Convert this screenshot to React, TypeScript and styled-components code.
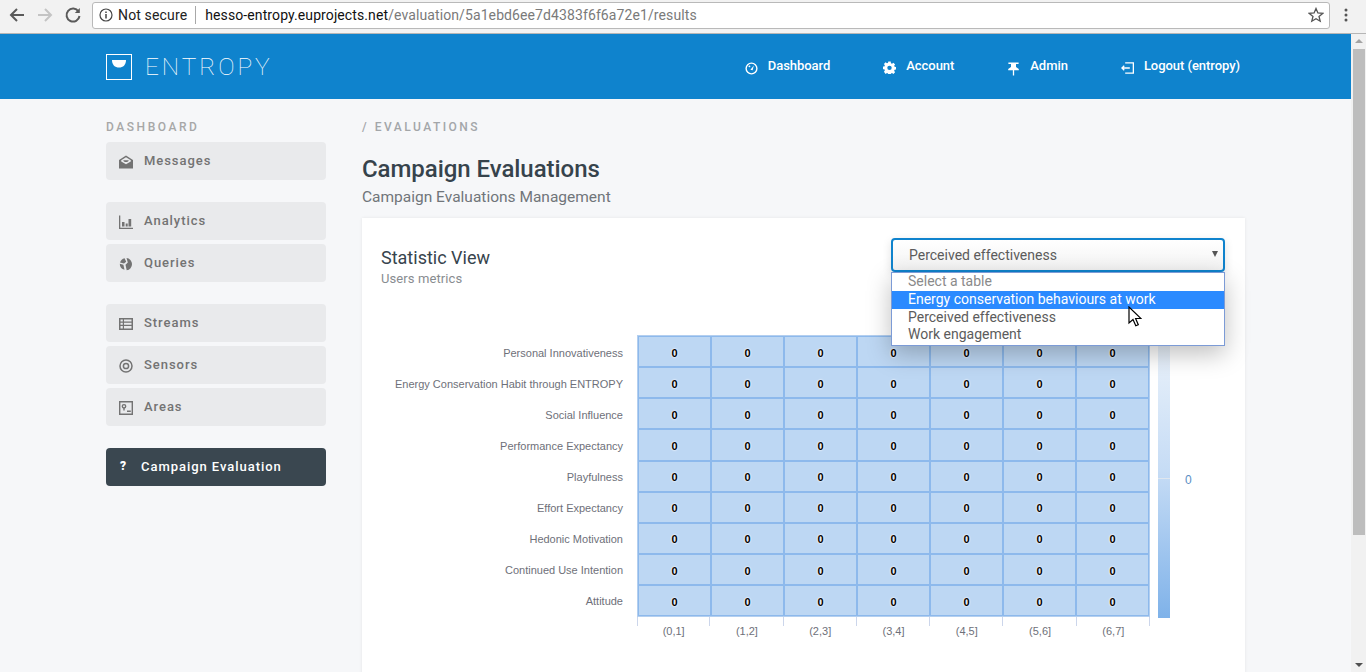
import React from "react";
import styled, { createGlobalStyle } from "styled-components";

const GlobalStyle = createGlobalStyle`
  html, body {
    margin: 0;
    padding: 0;
    height: 100%;
    overflow: hidden;
    background: #f6f7f9;
    font-family: Roboto, "Liberation Sans", sans-serif;
  }
  * {
    box-sizing: border-box;
  }
`;

const Window = styled.div`
  width: 1366px;
  height: 672px;
  display: flex;
  flex-direction: column;
  overflow: hidden;
`;

/* browser chrome */
const BrowserBar = styled.div`
  height: 34px;
  flex: none;
  display: flex;
  align-items: center;
  background: #f2f2f2;
  border-bottom: 1px solid #b6b6b6;
  padding: 0 0 3px 8px;
`;

const NavGlyph = styled.div<{ $disabled?: boolean }>`
  width: 18px;
  height: 18px;
  margin-right: 10px;
  display: flex;
  color: ${(p) => (p.$disabled ? "#c4c4c4" : "#5a5a5a")};
`;

const AddressBox = styled.div`
  width: 1238px;
  height: 27px;
  display: flex;
  align-items: center;
  background: #fff;
  border: 1px solid #b9b9b9;
  border-radius: 3px;
  padding: 0 5px 0 6px;
  font-size: 14px;
  color: #222;
`;

const NotSecure = styled.span`
  margin-left: 5px;
  padding-right: 8px;
  border-right: 1px solid #a8a8a8;
  line-height: 18px;
  letter-spacing: 0.15px;
`;

const Url = styled.span`
  margin-left: 9px;
  flex: 1;
  letter-spacing: 0.1px;
  color: #111;
`;

const UrlRest = styled.span`
  color: #7a7a7a;
`;

const Dots = styled.div`
  margin-left: 14px;
  display: flex;
  color: #555;
`;

/* page */
const Viewport = styled.div`
  flex: 1;
  display: flex;
  min-height: 0;
`;

const Page = styled.div`
  flex: 1;
  min-width: 0;
  background: #f6f7f9;
`;

const Scrollbar = styled.div`
  width: 15px;
  flex: none;
  position: relative;
  background: #f1f1f1;
`;

const ScrollThumb = styled.div`
  position: absolute;
  top: 15px;
  left: 2px;
  right: 1px;
  height: 486px;
  background: #bdbdbd;
`;

const ScrollArrow = styled.div<{ $down?: boolean }>`
  position: absolute;
  left: 4px;
  ${(p) => (p.$down ? "bottom: 5px;" : "top: 5px;")}
  width: 0;
  height: 0;
  border-left: 4px solid transparent;
  border-right: 4px solid transparent;
  ${(p) => (p.$down ? "border-top: 4px solid #505050;" : "border-bottom: 4px solid #a3a3a3;")}
`;

const Header = styled.header`
  height: 65px;
  background: #0f83cd;
`;

const HeaderInner = styled.div`
  width: 1139px;
  height: 100%;
  margin-left: 106px;
  display: flex;
  align-items: center;
  justify-content: space-between;
  padding-right: 5px;
`;

const Brand = styled.div`
  display: flex;
  align-items: center;
  color: #fff;
`;

const BrandName = styled.span`
  margin-left: 13px;
  font-size: 24.5px;
  font-weight: 100;
  letter-spacing: 2.9px;
  line-height: 30px;
`;

const TopNav = styled.nav`
  display: flex;
  gap: 53px;
`;

const TopLink = styled.a`
  display: flex;
  align-items: flex-start;
  gap: 10px;
  color: #fff;
  font-size: 13px;
  font-weight: 500;
  line-height: 16px;
  letter-spacing: -0.05px;
  svg {
    margin-top: 3px;
    flex: none;
  }
`;

const Content = styled.div`
  width: 1139px;
  margin-left: 106px;
  display: flex;
  gap: 36px;
`;

const Sidebar = styled.aside`
  width: 220px;
  flex: none;
  padding-top: 21px;
`;

const SideTitle = styled.div`
  font-size: 12px;
  font-weight: 500;
  line-height: 15px;
  letter-spacing: 2.55px;
  color: #a7a7a7;
  margin-bottom: 7px;
`;

const SideGroup = styled.div`
  display: flex;
  flex-direction: column;
  gap: 4px;
  margin-bottom: 22px;
`;

const SideItem = styled.a<{ $active?: boolean }>`
  height: 38px;
  display: flex;
  align-items: center;
  padding: 0 0 2px 13px;
  border-radius: 4px;
  background: ${(p) => (p.$active ? "#3a4750" : "#e9eaec")};
  color: ${(p) => (p.$active ? "#fff" : "#737373")};
  font-size: 13px;
  font-weight: 500;
  letter-spacing: 0.95px;
  svg {
    flex: none;
    margin: 3px 11px 0 0;
  }
`;

const QuestionMark = styled.span`
  width: 22px;
  padding-left: 1px;
  font-weight: 900;
  font-size: 12px;
`;

const Main = styled.main`
  flex: 1;
  min-width: 0;
`;

const Crumb = styled.div`
  padding-top: 21px;
  font-size: 12px;
  font-weight: 500;
  line-height: 15px;
  letter-spacing: 2.5px;
  color: #a3a6a9;
`;

const Title = styled.h1`
  margin: 19px 0 0;
  font-size: 24px;
  font-weight: 500;
  line-height: 30px;
  color: #36434c;
  letter-spacing: -0.05px;
`;

const Subtitle = styled.p`
  margin: 3px 0 0;
  font-size: 15.5px;
  line-height: 20px;
  color: #70757a;
`;

const Card = styled.section`
  margin-top: 11px;
  height: 460px;
  background: #fff;
  box-shadow: 0 0 3px rgba(0, 0, 0, 0.08);
  padding: 20px 20px 0 19px;
`;

const CardHead = styled.div`
  display: flex;
  justify-content: space-between;
  align-items: flex-start;
`;

const HeadText = styled.div`
  padding-top: 8px;
`;

const CardTitle = styled.div`
  font-size: 18px;
  line-height: 23px;
  color: #37444d;
`;

const CardSub = styled.div`
  font-size: 13px;
  line-height: 18px;
  margin-top: 1px;
  color: #888c90;
  letter-spacing: 0.1px;
`;

const SelectWrap = styled.div`
  position: relative;
  width: 334px;
  z-index: 2;
`;

const SelectBox = styled.div`
  height: 34px;
  display: flex;
  align-items: center;
  justify-content: space-between;
  padding: 0 5px 1px 16px;
  border: 2px solid #0f83cd;
  border-radius: 4px;
  background: linear-gradient(#fff, #f3f3f3);
  font-size: 14px;
  color: #5c5c5c;
  box-shadow: 0 3px 10px rgba(0, 0, 0, 0.12);
`;

const Caret = styled.span`
  width: 0;
  height: 0;
  margin-top: -1px;
  border-left: 3px solid transparent;
  border-right: 3px solid transparent;
  border-top: 6px solid #555;
`;

const OptionList = styled.div`
  position: absolute;
  top: 34px;
  left: 0;
  right: 0;
  height: 74px;
  background: #fff;
  border: 1px solid #7c9bd6;
  box-shadow: 0 8px 24px rgba(0, 0, 0, 0.25);
`;

const Option = styled.div<{ $hover?: boolean; $muted?: boolean }>`
  height: 17.8px;
  padding-left: 16px;
  font-size: 14px;
  line-height: 16px;
  background: ${(p) => (p.$hover ? "#2b8aff" : "transparent")};
  color: ${(p) => (p.$hover ? "#fff" : p.$muted ? "#8a8a8a" : "#5c5c5c")};
`;

const Cursor = styled.svg`
  position: absolute;
  left: 236px;
  top: 33px;
`;

/* heatmap */
const Chart = styled.div`
  margin-top: 47px;
  display: flex;
  font-family: "Liberation Sans", Arial, sans-serif;
`;

const RowLabels = styled.div`
  width: 242px;
  flex: none;
  padding-top: 2px;
  display: flex;
  flex-direction: column;
`;

const RowLabel = styled.div`
  height: 31.1px;
  display: flex;
  align-items: center;
  justify-content: flex-end;
  font-size: 11px;
  color: #6e7079;
`;

const Plot = styled.div`
  width: 513px;
  margin-left: 14px;
  flex: none;
`;

const Grid = styled.div`
  display: grid;
  grid-template-columns: repeat(7, 1fr);
  grid-auto-rows: 31.15px;
  border: 1px solid #b4cfef;
`;

const Cell = styled.div`
  display: flex;
  align-items: center;
  justify-content: center;
  padding-top: 2px;
  background: #bdd7f3;
  border: 1px solid #8db9ec;
  font-size: 11px;
  font-weight: 700;
  color: #000;
  text-shadow: 0 0 2px #fff, 0 0 2px #fff;
`;

const Axis = styled.div`
  display: grid;
  grid-template-columns: repeat(7, 1fr);
`;

const TickMark = styled.div`
  height: 9px;
  border-right: 1px solid #ccd6eb;
`;

const TickCell = styled.div`
  &:first-child ${TickMark} {
    border-left: 1px solid #ccd6eb;
  }
`;

const TickLabel = styled.div`
  text-align: center;
  font-size: 11px;
  line-height: 11px;
  color: #6e7079;
`;

const Legend = styled.div`
  margin-left: 8px;
  width: 12px;
  height: 283px;
  flex: none;
  position: relative;
  background: linear-gradient(#ecf3fb, #c6dcf5 48%, #7fb2e9);
`;

const LegendMark = styled.div`
  position: absolute;
  left: 0;
  right: 0;
  top: 143px;
  height: 1px;
  background: #dfe6ee;
`;

const LegendValue = styled.span`
  position: absolute;
  left: 27px;
  top: 138px;
  font-size: 12px;
  color: #5b8ec4;
`;

const rowNames = [
  "Personal Innovativeness",
  "Energy Conservation Habit through ENTROPY",
  "Social Influence",
  "Performance Expectancy",
  "Playfulness",
  "Effort Expectancy",
  "Hedonic Motivation",
  "Continued Use Intention",
  "Attitude",
];

const columnNames = ["(0,1]", "(1,2]", "(2,3]", "(3,4]", "(4,5]", "(5,6]", "(6,7]"];

const MailIcon = () => (
  <svg width="14" height="14" viewBox="0 0 14 14" fill="currentColor">
    <path
      fillRule="evenodd"
      d="M7 .5 14 5v8.500H0V5zM7 2.200 2.200 5.300v1.200L7 9.300l4.800-2.800V5.300zM4.300 5.200h5.400C9.700 6.300 8.500 7 7 7S4.300 6.300 4.300 5.200z"
    />
  </svg>
);

const BarsIcon = () => (
  <svg width="14" height="14" viewBox="0 0 14 14" fill="currentColor">
    <path d="M0 .5h1.300v12.200H14V14H0z" />
    <path d="M3 7h2.500v4.500H3zM6.700 8.500h2v3H6.700zM9.500 4h2.700v7.500H9.500z" />
  </svg>
);

const PieIcon = () => (
  <svg width="14" height="14" viewBox="0 0 14 14" fill="currentColor">
    <path d="M5.600 1.200 7.200 4.800 5 6.600 1 5.400A6.300 6.300 0 0 1 5.600 1.200z" />
    <path d="M.8 6.700 4.400 7.800 5.500 12.800A6.300 6.300 0 0 1 .8 6.700z" />
    <path d="M7.500 1a6.200 6.200 0 0 1 .2 12.300L6.500 7.700 8.800 5.500z" />
  </svg>
);

const TableIcon = () => (
  <svg width="14" height="14" viewBox="0 0 14 14" fill="currentColor">
    <path
      d="M0 1h14v12H0zM1.500 2.500v2h2.300v-2zM5 2.500v2h7.500v-2zM1.500 5.700v2h2.300v-2zM5 5.700v2h7.500v-2zM1.500 8.900v2.600h2.300V8.900zM5 8.900v2.600h7.500V8.900z"
      fillRule="evenodd"
    />
  </svg>
);

const TargetIcon = () => (
  <svg width="14" height="14" viewBox="0 0 14 14" fill="none" stroke="currentColor" strokeWidth="1.500">
    <circle cx="7" cy="7" r="6" />
    <circle cx="7" cy="7" r="2.600" />
  </svg>
);

const MapIcon = () => (
  <svg width="14" height="14" viewBox="0 0 14 14" fill="none" stroke="currentColor">
    <path d="M.7.700h12.600v12.600H.7z" strokeWidth="1.400" />
    <circle cx="5" cy="5.300" r="1.700" strokeWidth="1.400" />
    <path d="M5 7v2.500M8 10.200h3.800" strokeWidth="1.400" />
  </svg>
);

const GaugeIcon = () => (
  <svg width="13" height="14" viewBox="0 0 14 14" fill="none" stroke="currentColor" strokeWidth="1.500">
    <circle cx="7" cy="7.500" r="5.800" />
    <path d="M5.800 9 9.500 4.300 8.200 9.300z" fill="currentColor" stroke="none" />
    <circle cx="4.800" cy="5.200" r="1" fill="currentColor" stroke="none" />
  </svg>
);

const GearIcon = () => (
  <svg width="13" height="13" viewBox="0 0 14 14" fill="currentColor">
    <path
      fillRule="evenodd"
      d="M5.700.6h2.600l.3 1.800 1.100.5 1.500-1 1.800 1.800-1 1.500.5 1.100 1.800.3v2.600l-1.800.3-.5 1.100 1 1.500-1.800 1.800-1.500-1-1.100.5-.3 1.800H5.700l-.3-1.800-1.100-.5-1.500 1L1 11.600l1-1.500-.5-1.100L-.3 8.700V6.100l1.800-.3.500-1.100-1-1.500L2.800 1.400l1.500 1 1.100-.5zM7 5a2.400 2.400 0 1 0 0 4.800A2.400 2.400 0 0 0 7 5z"
    />
  </svg>
);

const PinIcon = () => (
  <svg width="13" height="15" viewBox="0 0 14 15" fill="currentColor">
    <path d="M1.500 1h11v1.600H9.700V6l3 2v1.400H7.700V15H6.300V9.400H1.300V8l3-2V2.600H1.500z" />
  </svg>
);

const LogoutIcon = () => (
  <svg width="13" height="14" viewBox="0 0 14 14" fill="none" stroke="currentColor" strokeWidth="1.400">
    <path d="M4.500 1.500h8.800v11H4.500M9.500 7H1M3.500 4.500 1 7l2.500 2.500" />
  </svg>
);

const LogoMark = () => (
  <svg width="26" height="26" viewBox="0 0 26 26">
    <rect x=".5" y=".5" width="25" height="25" fill="none" stroke="#fff" />
    <path d="M6 6h14c0 5-3 7.500-7 7.500S6 11 6 6z" fill="#fff" />
  </svg>
);

const App = () => {
  return (
    <Window>
      <GlobalStyle />
      <BrowserBar>
        <NavGlyph>
          <svg width="18" height="18" viewBox="0 0 18 18" fill="none" stroke="currentColor" strokeWidth="2">
            <path d="M16 9H3M9 3 3 9l6 6" />
          </svg>
        </NavGlyph>
        <NavGlyph $disabled>
          <svg width="18" height="18" viewBox="0 0 18 18" fill="none" stroke="currentColor" strokeWidth="2">
            <path d="M2 9h13M9 3l6 6-6 6" />
          </svg>
        </NavGlyph>
        <NavGlyph>
          <svg width="18" height="18" viewBox="0 0 18 18" fill="none" stroke="currentColor" strokeWidth="2">
            <path d="M14.500 5.500A6.500 6.500 0 1 0 15.500 10" />
            <path d="M15.800 2v5h-5z" fill="currentColor" stroke="none" />
          </svg>
        </NavGlyph>
        <AddressBox>
          <svg width="14" height="14" viewBox="0 0 14 14" fill="none" stroke="#444" strokeWidth="1.200">
            <circle cx="7" cy="7" r="6" />
            <path d="M7 6v4.500M7 3.500v1.400" strokeWidth="1.500" />
          </svg>
          <NotSecure>Not secure</NotSecure>
          <Url>
            hesso-entropy.euprojects.net
            <UrlRest>/evaluation/5a1ebd6ee7d4383f6f6a72e1/results</UrlRest>
          </Url>
          <svg width="16" height="16" viewBox="0 0 16 16" fill="none" stroke="#555" strokeWidth="1.300">
            <path d="M8 1.500 9.900 6l4.800.4-3.700 3.100 1.200 4.700L8 11.700l-4.200 2.500L5 9.500 1.300 6.400 6.100 6z" />
          </svg>
        </AddressBox>
        <Dots>
          <svg width="4" height="16" viewBox="0 0 4 16" fill="currentColor">
            <circle cx="2" cy="3" r="1.500" />
            <circle cx="2" cy="8" r="1.500" />
            <circle cx="2" cy="13" r="1.500" />
          </svg>
        </Dots>
      </BrowserBar>
      <Viewport>
        <Page>
          <Header>
            <HeaderInner>
              <Brand>
                <LogoMark />
                <BrandName>ENTROPY</BrandName>
              </Brand>
              <TopNav>
                <TopLink>
                  <GaugeIcon />
                  Dashboard
                </TopLink>
                <TopLink>
                  <GearIcon />
                  Account
                </TopLink>
                <TopLink>
                  <PinIcon />
                  Admin
                </TopLink>
                <TopLink>
                  <LogoutIcon />
                  Logout (entropy)
                </TopLink>
              </TopNav>
            </HeaderInner>
          </Header>
          <Content>
            <Sidebar>
              <SideTitle>DASHBOARD</SideTitle>
              <SideGroup>
                <SideItem>
                  <MailIcon />
                  Messages
                </SideItem>
              </SideGroup>
              <SideGroup>
                <SideItem>
                  <BarsIcon />
                  Analytics
                </SideItem>
                <SideItem>
                  <PieIcon />
                  Queries
                </SideItem>
              </SideGroup>
              <SideGroup>
                <SideItem>
                  <TableIcon />
                  Streams
                </SideItem>
                <SideItem>
                  <TargetIcon />
                  Sensors
                </SideItem>
                <SideItem>
                  <MapIcon />
                  Areas
                </SideItem>
              </SideGroup>
              <SideGroup>
                <SideItem $active>
                  <QuestionMark>?</QuestionMark>
                  Campaign Evaluation
                </SideItem>
              </SideGroup>
            </Sidebar>
            <Main>
              <Crumb>/ EVALUATIONS</Crumb>
              <Title>Campaign Evaluations</Title>
              <Subtitle>Campaign Evaluations Management</Subtitle>
              <Card>
                <CardHead>
                  <HeadText>
                    <CardTitle>Statistic View</CardTitle>
                    <CardSub>Users metrics</CardSub>
                  </HeadText>
                  <SelectWrap>
                    <SelectBox>
                      Perceived effectiveness
                      <Caret />
                    </SelectBox>
                    <OptionList>
                      <Option $muted>Select a table</Option>
                      <Option $hover>Energy conservation behaviours at work</Option>
                      <Option>Perceived effectiveness</Option>
                      <Option>Work engagement</Option>
                      <Cursor width="14" height="21" viewBox="0 0 14 21">
                        <path d="M1 1v16l4-3.500 2.800 6.300 2.500-1.100L7.600 12.500H13z" fill="#fff" stroke="#000" strokeWidth="1.200" />
                      </Cursor>
                    </OptionList>
                  </SelectWrap>
                </CardHead>
                <Chart>
                  <RowLabels>
                    {rowNames.map((name) => (
                      <RowLabel key={name}>{name}</RowLabel>
                    ))}
                  </RowLabels>
                  <Plot>
                    <Grid>
                      {rowNames.flatMap((name) =>
                        columnNames.map((col) => <Cell key={name + col}>0</Cell>)
                      )}
                    </Grid>
                    <Axis>
                      {columnNames.map((col) => (
                        <TickCell key={col}>
                          <TickMark />
                          <TickLabel>{col}</TickLabel>
                        </TickCell>
                      ))}
                    </Axis>
                  </Plot>
                  <Legend>
                    <LegendMark />
                    <LegendValue>0</LegendValue>
                  </Legend>
                </Chart>
              </Card>
            </Main>
          </Content>
        </Page>
        <Scrollbar>
          <ScrollArrow />
          <ScrollThumb />
          <ScrollArrow $down />
        </Scrollbar>
      </Viewport>
    </Window>
  );
};

export default App;
